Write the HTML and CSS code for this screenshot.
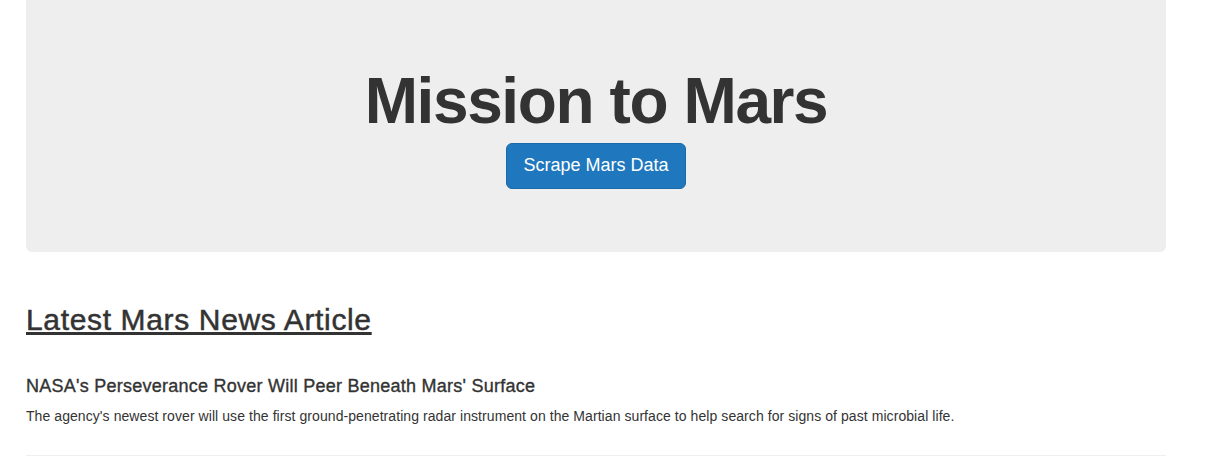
FILE: index.html
```html
<!DOCTYPE html>
<html lang="en">
<head>
<meta charset="utf-8">
<title>Mission to Mars</title>
<link rel="stylesheet" href="styles.css">
</head>
<body>
<div class="container">
  <div class="jumbotron">
    <h1 class="title">Mission to Mars</h1>
    <p class="actions"><a class="btn-primary" href="#">Scrape Mars Data</a></p>
  </div>
  <section class="news">
    <h2 class="section-title"><u>Latest Mars News Article</u></h2>
    <h4 class="news-title">NASA's Perseverance Rover Will Peer Beneath Mars' Surface</h4>
    <p class="news-body">The agency's newest rover will use the first ground-penetrating radar instrument on the Martian surface to help search for signs of past microbial life.</p>
    <hr class="divider">
  </section>
</div>
</body>
</html>
```

FILE: styles.css
```css
* { box-sizing: border-box; }
html, body { margin: 0; padding: 0; background: #fff; }
body {
  font-family: "Liberation Sans", Arial, Helvetica, sans-serif;
  font-size: 14px;
  line-height: 1.42857;
  color: #333;
}
.container {
  width: 1140px;
  margin-left: 26px;
}
.jumbotron {
  background: #eee;
  border-radius: 0 0 6px 6px;
  padding: 44px 60px 48px;
  margin-bottom: 30px;
  text-align: center;
}
.title {
  font-size: 64px;
  font-weight: 700;
  letter-spacing: -1.4px;
  line-height: 1.1;
  margin: 22px 0 7px;
  color: #333;
}
.actions { margin: 0 0 15px; }
.btn-primary {
  display: inline-block;
  padding: 10px 16px;
  font-size: 18px;
  line-height: 1.3333;
  border-radius: 6px;
  color: #fff;
  background: #1f77bd;
  border: 1px solid #1a6aa9;
  text-decoration: none;
}
.section-title {
  font-size: 30px;
  font-weight: 400;
  letter-spacing: 0.65px;
  -webkit-text-stroke: 0.5px #333;
  line-height: 1.1;
  margin: 51px 0 10px;
}
.news-title {
  font-size: 18px;
  font-weight: 400;
  letter-spacing: 0.25px;
  -webkit-text-stroke: 0.35px #333;
  line-height: 1.1;
  margin: 41px 0 10px;
}
.news-body { margin: 0 0 10px; font-size: 14px; letter-spacing: 0.07px; }
.divider {
  border: 0;
  border-top: 1px solid #eee;
  margin: 28px 0 20px;
}
```
